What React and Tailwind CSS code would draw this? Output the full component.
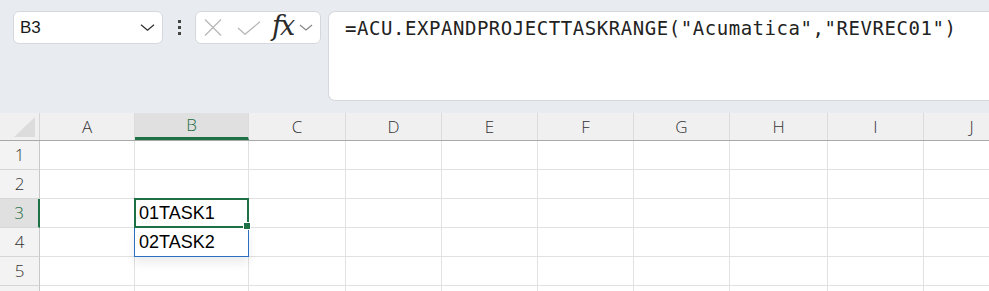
import React from 'react';

const cols = [
  { id: 'A', w: 'w-[95px]' },
  { id: 'B', w: 'w-[114px]' },
  { id: 'C', w: 'w-[97px]' },
  { id: 'D', w: 'w-[96px]' },
  { id: 'E', w: 'w-[96px]' },
  { id: 'F', w: 'w-[96px]' },
  { id: 'G', w: 'w-[96px]' },
  { id: 'H', w: 'w-[98px]' },
  { id: 'I', w: 'w-[96px]' },
  { id: 'J', w: 'w-[96px]' },
];

const rows = [1, 2, 3, 4, 5, 6];

const Chevron = ({ className }) => (
  <svg className={className} viewBox="0 0 15 7" fill="none" stroke="currentColor" strokeWidth="1.3">
    <path d="M1 0.8 L7.5 6.2 L14 0.8" />
  </svg>
);

const FormulaBar = () => (
  <div className="h-[113px] bg-[#e8ecf0] flex items-start pt-[11px] pl-[13px]">
    {/* Name box */}
    <div className="w-[150px] h-[33px] shrink-0 bg-white border border-[#d4d8dc] rounded-[6px] flex items-center justify-between pl-[6px] pr-[7px]">
      <span className="text-[17px] text-[#1a1a1a] font-['Liberation_Sans',sans-serif]">B3</span>
      <Chevron className="w-[15px] h-[7px] text-[#333]" />
    </div>

    {/* Dots */}
    <div className="w-[32px] h-[33px] shrink-0 flex flex-col items-center justify-center gap-[3px]">
      <span className="w-[3px] h-[3px] bg-[#444]" />
      <span className="w-[3px] h-[3px] bg-[#444]" />
      <span className="w-[3px] h-[3px] bg-[#444]" />
    </div>

    {/* Function box */}
    <div className="w-[126px] h-[33px] shrink-0 bg-white border border-[#d4d8dc] rounded-[6px] flex items-center pl-[8px] pr-[3px]">
      <svg className="w-[18px] h-[17px] text-[#b8b8b8]" viewBox="0 0 18 17" fill="none" stroke="currentColor" strokeWidth="1.3">
        <path d="M1 0.5 L17 16.5 M17 0.5 L1 16.5" />
      </svg>
      <svg className="w-[24px] h-[14px] ml-[15px] text-[#b8b8b8]" viewBox="0 0 24 14" fill="none" stroke="currentColor" strokeWidth="1.3">
        <path d="M1 7 L8 13.3 L23 0.7" />
      </svg>
      <span className="ml-[11px] text-[27px] leading-none italic text-[#2a2a2a] font-['DejaVu_Serif',serif] tracking-[-2px] -mt-[4px]">fx</span>
      <Chevron className="ml-[6px] w-[14px] h-[7px] text-[#888]" />
    </div>

    {/* Formula input */}
    <div className="ml-[7px] flex-1 h-[90px] bg-white border border-[#d4d8dc] border-r-0 rounded-l-[7px] pl-[16px] pt-[4px]">
      <div className="text-[19px] leading-[24px] tracking-[0.55px] text-[#222] font-['DejaVu_Sans_Mono',monospace] whitespace-nowrap">
        =ACU.EXPANDPROJECTTASKRANGE("Acumatica","REVREC01")
      </div>
    </div>
  </div>
);

const Sheet = () => (
  <div className="bg-white font-['Open_Sans',sans-serif]">
    {/* Column headers */}
    <div className="flex h-[28px] bg-[#f0f0f0] border-b border-[#a8a8a8]">
      <div className="w-[40px] shrink-0 border-r border-[#d6d6d6] flex items-end justify-end pr-[4px] pb-[3px]">
        <svg width="21" height="20" viewBox="0 0 21 20">
          <path d="M21 0 L21 20 L0 20 Z" fill="#dcdcdc" />
        </svg>
      </div>
      {cols.map((c) => (
        <div
          key={c.id}
          className={`${c.w} shrink-0 border-r border-[#dcdcdc] flex items-center justify-center text-[17px] font-light ${
            c.id === 'B' ? 'bg-[#e0e0e0] text-[#1e6e43] border-b-[3px] border-b-[#1e7145]' : 'text-[#333]'
          }`}
        >
          {c.id}
        </div>
      ))}
      <div className="flex-1" />
    </div>

    {rows.map((r) => (
      <div key={r} className="flex h-[29px]">
        <div
          className={`w-[40px] shrink-0 flex items-center justify-center text-[17px] font-light border-b border-[#d6d6d6] ${
            r === 3
              ? 'bg-[#e0e0e0] text-[#1e6e43] border-r-[2px] border-r-[#1e7145]'
              : 'bg-[#f3f3f3] text-[#333] border-r border-r-[#c8c8c8]'
          }`}
        >
          {r < 6 ? r : ''}
        </div>
        {cols.map((c) => (
          <div key={c.id} className={`${c.w} shrink-0 relative border-r border-b border-[#e1e1e1]`}>
            {c.id === 'B' && r === 3 && (
              <div className="absolute -left-px -top-px right-[-1px] bottom-[-1px] border-2 border-[#1e7145] z-20 flex items-center pl-[3px]">
                <span className="text-[18px] text-black font-['Liberation_Sans',sans-serif]">01TASK1</span>
                <span className="absolute right-[-4px] bottom-[-4px] w-[6px] h-[6px] bg-[#1e7145] border border-white box-content" />
              </div>
            )}
            {c.id === 'B' && r === 4 && (
              <div className="absolute -left-px -top-px right-[-1px] bottom-[-1px] border border-[#2a6fc2] z-10 flex items-center pl-[4px] shadow-[0_6px_10px_rgba(0,0,0,0.08)]">
                <span className="text-[18px] text-black font-['Liberation_Sans',sans-serif]">02TASK2</span>
              </div>
            )}
          </div>
        ))}
        <div className="flex-1 border-b border-[#e1e1e1]" />
      </div>
    ))}
  </div>
);

export default function App() {
  return (
    <div className="w-[989px] h-[291px] overflow-hidden bg-white">
      <FormulaBar />
      <Sheet />
    </div>
  );
}
